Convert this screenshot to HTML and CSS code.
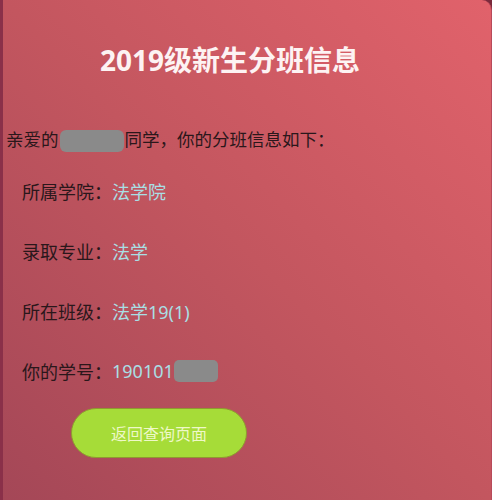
FILE: index.html
```html
<!DOCTYPE html>
<html lang="zh-CN">
<head>
<meta charset="utf-8">
<title>2019级新生分班信息</title>
<link rel="stylesheet" href="styles.css">
</head>
<body>
<main class="card">
  <h1 class="title">2019级新生分班信息</h1>
  <p class="greeting">亲爱的<span class="mask mask-name"></span>同学，你的分班信息如下：</p>
  <div class="info">
    <div class="row"><span class="label">所属学院：</span><span class="value">法学院</span></div>
    <div class="row"><span class="label">录取专业：</span><span class="value">法学</span></div>
    <div class="row"><span class="label">所在班级：</span><span class="value">法学19(1)</span></div>
    <div class="row"><span class="label">你的学号：</span><span class="value">190101</span><span class="mask mask-id"></span></div>
  </div>
  <button class="back-btn" type="button">返回查询页面</button>
</main>
</body>
</html>
```
FILE: styles.css
```css
* { box-sizing: border-box; }

html, body {
  margin: 0;
  height: 100%;
}

body {
  background: #7a2a3c;
  font-family: "Microsoft YaHei", "Noto Sans", "Noto Sans CJK SC", sans-serif;
}

.card {
  min-height: 500px;
  border-left: 3px solid #8a3049;
  border-right: 1px solid #b84a5a;
  border-radius: 0 10px 0 0;
  background: linear-gradient(to top right, #a44757 0%, #c3565f 50%, #e1626b 100%);
  padding-top: 40px;
}

.title {
  margin: 0;
  padding-right: 34px;
  text-align: center;
  font-size: 28px;
  font-weight: 700;
  line-height: 40px;
  color: #fdf3f3;
}

.greeting {
  margin: 44px 0 0;
  padding-left: 3px;
  font-size: 17.5px;
  line-height: 30px;
  color: #2a171b;
  white-space: nowrap;
}

.mask {
  display: inline-block;
  height: 22px;
  background: #8a8a8a;
  border-radius: 6px;
  vertical-align: middle;
}

.mask-name { width: 64px; margin: 0 1px 0 1px; }
.mask-id { width: 44px; border-radius: 5px; }

.info {
  margin-top: 7px;
  display: flex;
  flex-direction: column;
}

.row {
  height: 60px;
  display: flex;
  align-items: center;
  padding-left: 19px;
  font-size: 18px;
}

.label { color: #2a171b; }
.value { color: #a9dfe4; }

.back-btn {
  display: block;
  margin: 7px 0 0 68px;
  width: 176px;
  height: 50px;
  border: 1px solid #8f9a30;
  border-radius: 25px;
  background: #a6dc38;
  color: #eef8c8;
  font-family: inherit;
  font-size: 16px;
  cursor: pointer;
}
```
